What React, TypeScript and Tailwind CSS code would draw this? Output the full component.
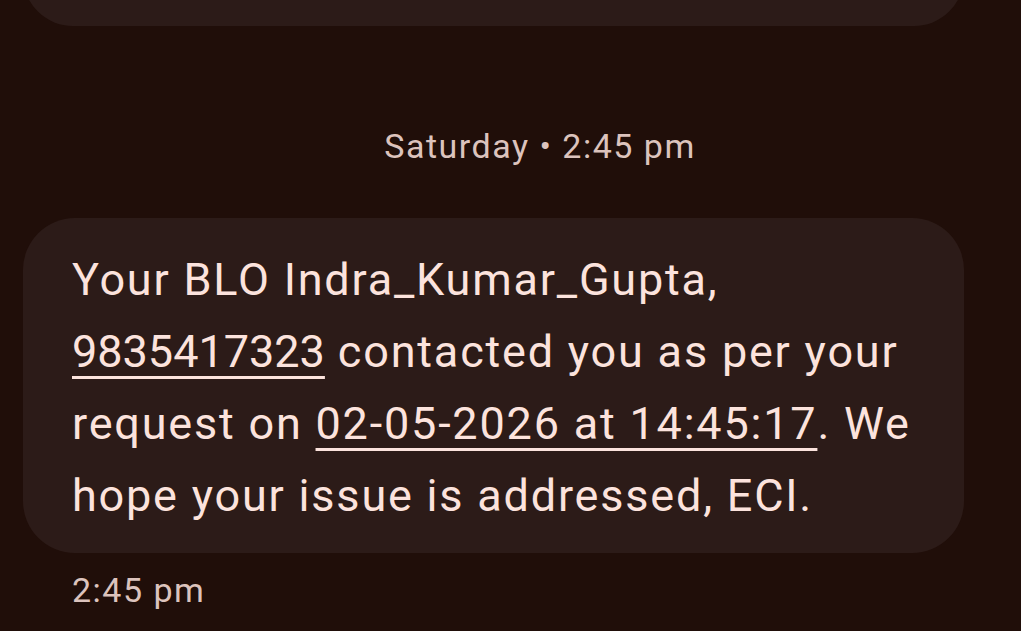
import React from "react";

export default function App() {
  return (
    <div
      className="w-[1021px] h-[631px] overflow-hidden bg-[#200e09] flex flex-col"
      style={{ fontFamily: 'Roboto, "Noto Sans", sans-serif' }}
    >
      <div className="mt-[-74px] ml-[23px] w-[941px] h-[100px] shrink-0 rounded-[52px] bg-[#2c1b18]" />
      <div className="mt-[100px] flex justify-center pl-[59px] text-[34px] leading-[40px] tracking-[1.5px] text-[#dcc3bd]">
        <span>Saturday • 2:45 pm</span>
      </div>
      <div className="mt-[52px] ml-[23px] w-[941px] shrink-0 rounded-[52px] bg-[#2c1b18] pl-[49px] pr-[20px] pt-[26px] pb-[21px] text-[45px] leading-[72px] tracking-[1.8px] text-[#fce3dd] whitespace-nowrap">
        Your BLO Indra_Kumar_Gupta,
        <br />
        <span className="underline decoration-[3px] underline-offset-[9px] tracking-[0px]">9835417323</span> contacted you as per your
        <br />
        request on <span className="underline decoration-[3px] underline-offset-[9px]">02-05-2026 at 14:45:17</span>. We
        <br />
        hope your issue is addressed, ECI.
      </div>
      <div className="mt-[17px] ml-[72px] text-[34px] leading-[40px] tracking-[1.5px] text-[#dcc3bd]">2:45 pm</div>
    </div>
  );
}
